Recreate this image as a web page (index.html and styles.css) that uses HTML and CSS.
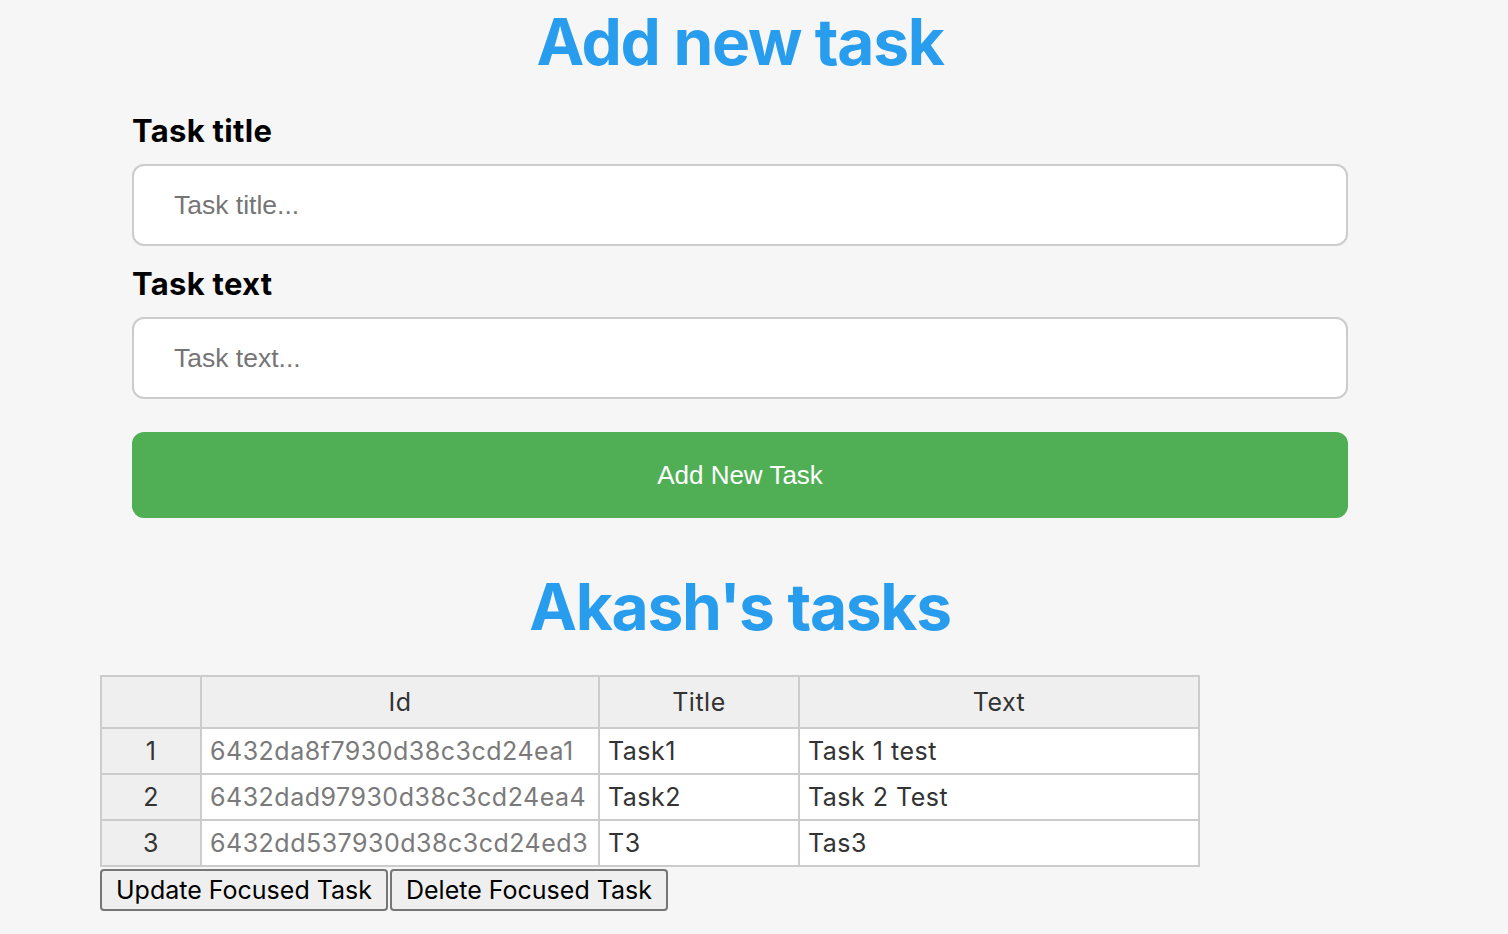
FILE: index.html
```html
<!DOCTYPE html>
<html lang="en">
<head>
<meta charset="utf-8">
<title>Tasks</title>
<link rel="stylesheet" href="styles.css">
</head>
<body>
<div class="page">
  <h1 class="heading">Add new task</h1>
  <form class="task-form">
    <label class="field-label" for="title">Task title</label>
    <input class="field-input" id="title" type="text" placeholder="Task title...">
    <label class="field-label second" for="text">Task text</label>
    <input class="field-input" id="text" type="text" placeholder="Task text...">
    <button class="add-btn" type="button">Add New Task</button>
  </form>
  <h1 class="heading tasks-heading">Akash's tasks</h1>
  <div class="grid-wrap">
    <table class="grid">
      <colgroup>
        <col class="c-index"><col class="c-id"><col class="c-title"><col class="c-text">
      </colgroup>
      <thead>
        <tr><th></th><th>Id</th><th>Title</th><th>Text</th></tr>
      </thead>
      <tbody>
        <tr><td class="idx">1</td><td class="id">6432da8f7930d38c3cd24ea1</td><td>Task1</td><td>Task 1 test</td></tr>
        <tr><td class="idx">2</td><td class="id">6432dad97930d38c3cd24ea4</td><td>Task2</td><td>Task 2 Test</td></tr>
        <tr><td class="idx">3</td><td class="id">6432dd537930d38c3cd24ed3</td><td>T3</td><td>Tas3</td></tr>
      </tbody>
    </table>
    <div class="actions">
      <button class="plain-btn" type="button">Update Focused Task</button><button class="plain-btn" type="button">Delete Focused Task</button>
    </div>
  </div>
</div>
</body>
</html>
```

FILE: styles.css
```css
html, body {
  margin: 0;
  padding: 0;
  background: #f6f6f6;
}
body {
  font-family: Inter, "Liberation Sans", sans-serif;
  color: #000;
}
.page {
  width: 1480px;
}
.heading {
  margin: 3px 0 0;
  text-align: center;
  font-family: Inter, sans-serif;
  font-weight: 700;
  font-size: 64px;
  line-height: 77px;
  color: #289ded;
  letter-spacing: -1.3px;
}
.task-form {
  display: flex;
  flex-direction: column;
  margin: 34px 132px 0;
}
.field-label {
  font-family: Inter, sans-serif;
  font-weight: 700;
  font-size: 31px;
  line-height: 34px;
  letter-spacing: 0.3px;
  margin-bottom: 16px;
}
.field-label.second {
  margin-top: 21px;
}
.field-input {
  box-sizing: border-box;
  height: 82px;
  border: 2px solid #cccccc;
  border-radius: 12px;
  background: #fff;
  padding: 0 40px;
  font-family: "Liberation Sans", Arial, sans-serif;
  font-size: 26.5px;
  color: #333;
  outline: none;
}
.field-input::placeholder {
  color: #757575;
}
.add-btn {
  margin-top: 33px;
  height: 86px;
  border: none;
  border-radius: 12px;
  background: #50af55;
  color: #fff;
  font-family: "Liberation Sans", Arial, sans-serif;
  font-size: 26px;
}
.tasks-heading {
  margin-top: 50px;
}
.grid-wrap {
  margin: 30px 0 0 100px;
}
.grid {
  border-collapse: collapse;
  table-layout: fixed;
  width: 1100px;
  font-family: Inter, sans-serif;
  font-size: 25px;
  letter-spacing: 0.5px;
  color: #333;
}
.c-index { width: 100px; }
.c-id { width: 398px; }
.c-title { width: 200px; }
.c-text { width: 400px; }
.grid th, .grid td {
  border: 2px solid #cccccc;
  padding: 0 8px;
  white-space: nowrap;
  overflow: hidden;
}
.grid th {
  height: 50px;
  background: #efefef;
  font-weight: 400;
  text-align: center;
}
.grid td {
  height: 44px;
  background: #fff;
  text-align: left;
}
.grid td.idx {
  background: #efefef;
  text-align: center;
}
.grid td.id {
  color: #7a7a7a;
}
.actions {
  display: flex;
  gap: 2px;
  margin-top: 2px;
}
.plain-btn {
  box-sizing: border-box;
  height: 42px;
  padding: 0 14px;
  border: 2px solid #767676;
  border-radius: 4px;
  background: #efefef;
  font-family: Inter, sans-serif;
  font-size: 25px;
  color: #000;
}
```
